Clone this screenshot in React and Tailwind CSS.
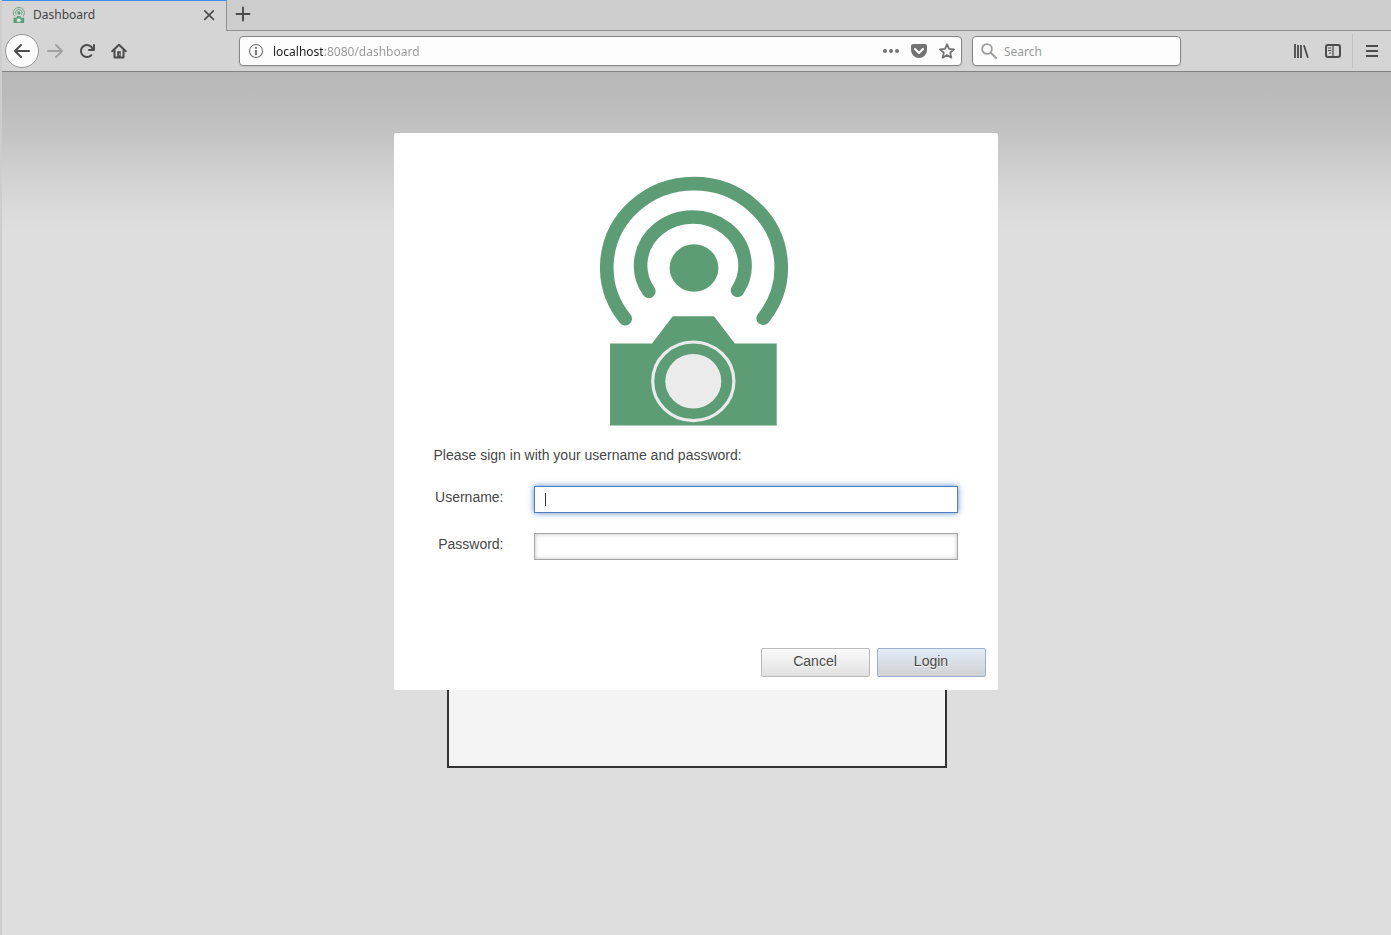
import React from "react";

const GREEN = "#5d9d76";
const LIGHT = "#ebebeb";

function Logo({ className }) {
  return (
    <svg viewBox="600 176 192 250" className={className} role="img" aria-label="Dashboard logo">
      <g fill="none" stroke={GREEN} strokeWidth="13.6" strokeLinecap="round">
        <path d="M625.2 318.8A87.2 83.7 0 1 1 763.2 318.3" />
        <path d="M648.8 291.4A52.2 48.4 0 1 1 737.5 290.4" />
      </g>
      <ellipse cx="694" cy="268" rx="24.4" ry="23.7" fill={GREEN} />
      <path d="M610 343.6H652L672.8 316.3H714L734.8 343.6H776.7V425.4H610Z" fill={GREEN} />
      <ellipse cx="693.3" cy="381.3" rx="40.6" ry="39.3" fill="none" stroke={LIGHT} strokeWidth="3.2" />
      <ellipse cx="693.3" cy="381.3" rx="28" ry="27.3" fill={LIGHT} />
    </svg>
  );
}

function Icon({ children, className = "size-4", filled = false }) {
  return (
    <svg
      viewBox="0 0 16 16"
      className={className}
      fill={filled ? "currentColor" : "none"}
      stroke={filled ? "none" : "currentColor"}
      strokeWidth="2"
      strokeLinecap="round"
      strokeLinejoin="round"
      aria-hidden="true"
    >
      {children}
    </svg>
  );
}

function ToolButton({ label, children, className = "" }) {
  return (
    <button type="button" aria-label={label} className={`flex h-8 w-8 shrink-0 items-center justify-center ${className}`}>
      {children}
    </button>
  );
}

function TabStrip() {
  return (
    <div className="flex h-[31px]">
      <div className="flex w-[225px] items-center border-t border-r border-t-[#3b8ce4] border-r-[#909090] bg-[#d5d5d5] pr-[10px] pb-[2px] pl-[10px]">
        <Logo className="h-4 w-[14px]" />
        <span className="ml-[7px] flex-1 text-xs text-[#444]">Dashboard</span>
        <button type="button" aria-label="Close tab" className="text-[#4f4f4f]">
          <svg viewBox="0 0 14 14" className="size-[14px]" fill="none" stroke="currentColor" strokeWidth="1.7" strokeLinecap="round" aria-hidden="true">
            <path d="M2.8 2.8l8.6 8.6M11.4 2.8l-8.6 8.6" />
          </svg>
        </button>
      </div>
      <div className="flex flex-1 border-b border-[#909090] bg-[#cdcdcd] pb-[2px]">
        <ToolButton label="New tab" className="h-full text-[#4a4a4a]">
          <Icon>
            <path d="M8 1.5v13M1.5 8h13" strokeWidth="1.9" />
          </Icon>
        </ToolButton>
      </div>
    </div>
  );
}

function NavBar() {
  return (
    <div className="flex h-[41px] items-center border-b border-[#828282] bg-[#d5d5d5] pr-[3px] pl-[3px] text-[#4c4c4c]">
      <button
        type="button"
        aria-label="Back"
        className="flex size-[34px] shrink-0 items-center justify-center rounded-full border border-[#979797] bg-[#fafafa]"
      >
        <Icon filled>
          <path d="M15 7H3.414l4.293-4.293a1 1 0 0 0-1.414-1.414l-6 6a1 1 0 0 0 0 1.414l6 6a1 1 0 0 0 1.414-1.414L3.414 9H15a1 1 0 0 0 0-2z" />
        </Icon>
      </button>
      <ToolButton label="Forward" className="text-[#a2a2a2]">
        <Icon filled>
          <path d="M1 7h11.586L8.293 2.707a1 1 0 0 1 1.414-1.414l6 6a1 1 0 0 1 0 1.414l-6 6a1 1 0 0 1-1.414-1.414L12.586 9H1a1 1 0 0 1 0-2z" />
        </Icon>
      </ToolButton>
      <ToolButton label="Reload">
        <Icon filled>
          <path d="M15 1a1 1 0 0 0-1 1v2.418A6.995 6.995 0 1 0 8 15a6.954 6.954 0 0 0 4.95-2.05 1 1 0 0 0-1.414-1.414A5.019 5.019 0 1 1 12.549 6H10a1 1 0 0 0 0 2h5a1 1 0 0 0 1-1V2a1 1 0 0 0-1-1z" />
        </Icon>
      </ToolButton>
      <ToolButton label="Home">
        <Icon>
          <path d="M1.2 8.3L8 1.7l6.8 6.6" />
          <path d="M3.500 7.500v7h9v-7" />
          <path d="M6.200 8.200h3.600v6H6.200z" fill="currentColor" stroke="none" />
          <path d="M8.300 10.600h.9v1.600h-.9z" fill="#d5d5d5" stroke="none" />
        </Icon>
      </ToolButton>

      <div className="ml-[104px] flex h-[30px] flex-1 items-center rounded border border-[#858585] bg-[#fdfdfd] text-[#737373] shadow-[0_1px_2px_rgba(0,0,0,0.08)]">
        <button type="button" aria-label="Site information" className="flex w-8 shrink-0 items-center justify-center">
          <svg viewBox="0 0 16 16" className="size-4" aria-hidden="true">
            <circle cx="8" cy="8" r="6.5" fill="none" stroke="currentColor" strokeWidth="1.1" />
            <circle cx="8" cy="4.9" r="1.1" fill="currentColor" />
            <path d="M8 7.6v3.8" stroke="currentColor" strokeWidth="1.9" strokeLinecap="round" />
          </svg>
        </button>
        <input
          type="text"
          aria-label="Address"
          defaultValue="localhost:8080/dashboard"
          className="ml-px min-w-0 flex-1 bg-[linear-gradient(90deg,#1c1c1c_50px,#969696_50px)] bg-clip-text pt-[2px] text-xs text-transparent outline-none"
        />
        <button type="button" aria-label="Page actions" className="flex w-7 shrink-0 justify-center">
          <Icon filled>
            <circle cx="2" cy="8" r="2" />
            <circle cx="8" cy="8" r="2" />
            <circle cx="14" cy="8" r="2" />
          </Icon>
        </button>
        <button type="button" aria-label="Save to Pocket" className="flex w-7 shrink-0 justify-center">
          <Icon filled>
            <path d="M8 15a8 8 0 0 1-8-8V3a2 2 0 0 1 2-2h12a2 2 0 0 1 2 2v4a8 8 0 0 1-8 8zm3.985-10.032a.99.99 0 0 0-.725.319L7.978 8.57 4.755 5.336A.984.984 0 0 0 4 4.968a1 1 0 0 0-.714 1.7l-.016.011 3.293 3.306.707.707a1 1 0 0 0 1.414 0l.707-.707L12.7 6.679a1 1 0 0 0-.715-1.711z" />
          </Icon>
        </button>
        <button type="button" aria-label="Bookmark this page" className="flex w-7 shrink-0 justify-center">
          <Icon>
            <path d="M8 1.3l2 4.6 5 .5-3.8 3.3 1.1 5L8 12.1l-4.3 2.6 1.1-5L1 6.4l5-.5z" strokeWidth="1.8" />
          </Icon>
        </button>
      </div>

      <div className="ml-[10px] flex h-[30px] w-[209px] items-center rounded border border-[#858585] bg-[#fdfdfd] shadow-[0_1px_2px_rgba(0,0,0,0.08)]">
        <svg viewBox="0 0 16 16" className="ml-2 size-4 shrink-0 text-[#a0a0a0]" fill="none" stroke="currentColor" strokeLinecap="round" aria-hidden="true">
          <circle cx="6" cy="6" r="4.9" strokeWidth="1.9" />
          <path d="M9.8 9.8l5.2 5.2" strokeWidth="2" />
        </svg>
        <input
          type="search"
          aria-label="Search"
          placeholder="Search"
          className="ml-[7px] min-w-0 flex-1 pt-[2px] text-xs outline-none placeholder:text-[#9a9a9a]"
        />
      </div>

      <div className="ml-[104px] flex items-center">
        <ToolButton label="Library">
          <Icon>
            <path d="M2 1v14M5 2v13M8 2v13M10.9 2.200l4 12.600" strokeWidth="1.8" strokeLinecap="butt" />
          </Icon>
        </ToolButton>
        <ToolButton label="Sidebars">
          <Icon>
            <rect x="1" y="2" width="14" height="12" rx="2" />
            <path d="M8 2v12" strokeWidth="1.2" />
            <path d="M3 5h3.3M3 7.5h3.3M4 10h2.3" strokeWidth="1" strokeLinecap="butt" />
          </Icon>
        </ToolButton>
        <div className="mr-[3px] ml-[3px] h-[34px] w-px bg-[#c0c0c0]" />
        <ToolButton label="Menu">
          <Icon>
            <path d="M2 3h12M2 8h12M2 13h12" strokeLinecap="butt" />
          </Icon>
        </ToolButton>
      </div>
    </div>
  );
}

const FIELD = "h-[27px] w-full border px-[10px] text-sm outline-none";
const BUTTON = "h-[29px] w-[109px] rounded-[2px] border bg-linear-to-b pb-[3px] [text-shadow:0_1px_0_#fff]";

function LoginDialog() {
  return (
    <form
      aria-label="Sign in"
      onSubmit={(e) => e.preventDefault()}
      className="w-[604px] max-w-full rounded-[2px] bg-white pt-[43px] pb-[13px] text-sm leading-[22px] text-[#474747]"
    >
      <div className="px-10">
        <Logo className="mx-auto h-[250px] w-[192px]" />
        <p className="mt-[18px]">Please sign in with your username and password:</p>
        <div className="mt-5 grid grid-cols-[70px_1fr] gap-x-[30px] gap-y-5">
          <label htmlFor="username" className="text-right">Username:</label>
          <div className="relative h-[27px]">
            <input
              id="username"
              type="text"
              className={`${FIELD} border-[#4f80bd] caret-transparent shadow-[0_0_6px_rgba(60,110,190,0.85)]`}
            />
            <span className="absolute top-[7px] left-[11px] h-[13px] w-px bg-[#333]" />
          </div>
          <label htmlFor="password" className="text-right">Password:</label>
          <input
            id="password"
            type="password"
            className={`${FIELD} border-[#a6a6a6] shadow-[inset_0_0_4px_rgba(0,0,0,0.25)]`}
          />
        </div>
      </div>
      <div className="mt-[88px] flex justify-end gap-[7px] pr-3">
        <button type="button" className={`${BUTTON} border-[#bababa] from-[#fafafa] to-[#e1e1e1]`}>
          Cancel
        </button>
        <button type="submit" className={`${BUTTON} border-[#9cb0cc] from-[#e1ebf7] to-[#d0d1d2]`}>
          Login
        </button>
      </div>
    </form>
  );
}

export default function App() {
  return (
    <div className="relative font-['Noto_Sans',sans-serif]">
      <div className="flex min-h-screen flex-col border-l-2 border-[#cdcdcd] bg-[#dedede]">
        <TabStrip />
        <NavBar />
        <main className="flex flex-1 items-start justify-center bg-[linear-gradient(#b8b8b8_0px,#bababa_22px,#c3c3c3_61px,#cecece_93px,#dadada_135px,#dedede_160px)] pt-24">
          <section aria-label="Dashboard" className="h-[600px] w-[500px] max-w-full border-2 border-[#333] bg-[#f4f4f4]" />
        </main>
      </div>
      <div className="absolute inset-x-0 top-[133px] flex justify-center font-['Liberation_Sans',sans-serif]">
        <LoginDialog />
      </div>
    </div>
  );
}
